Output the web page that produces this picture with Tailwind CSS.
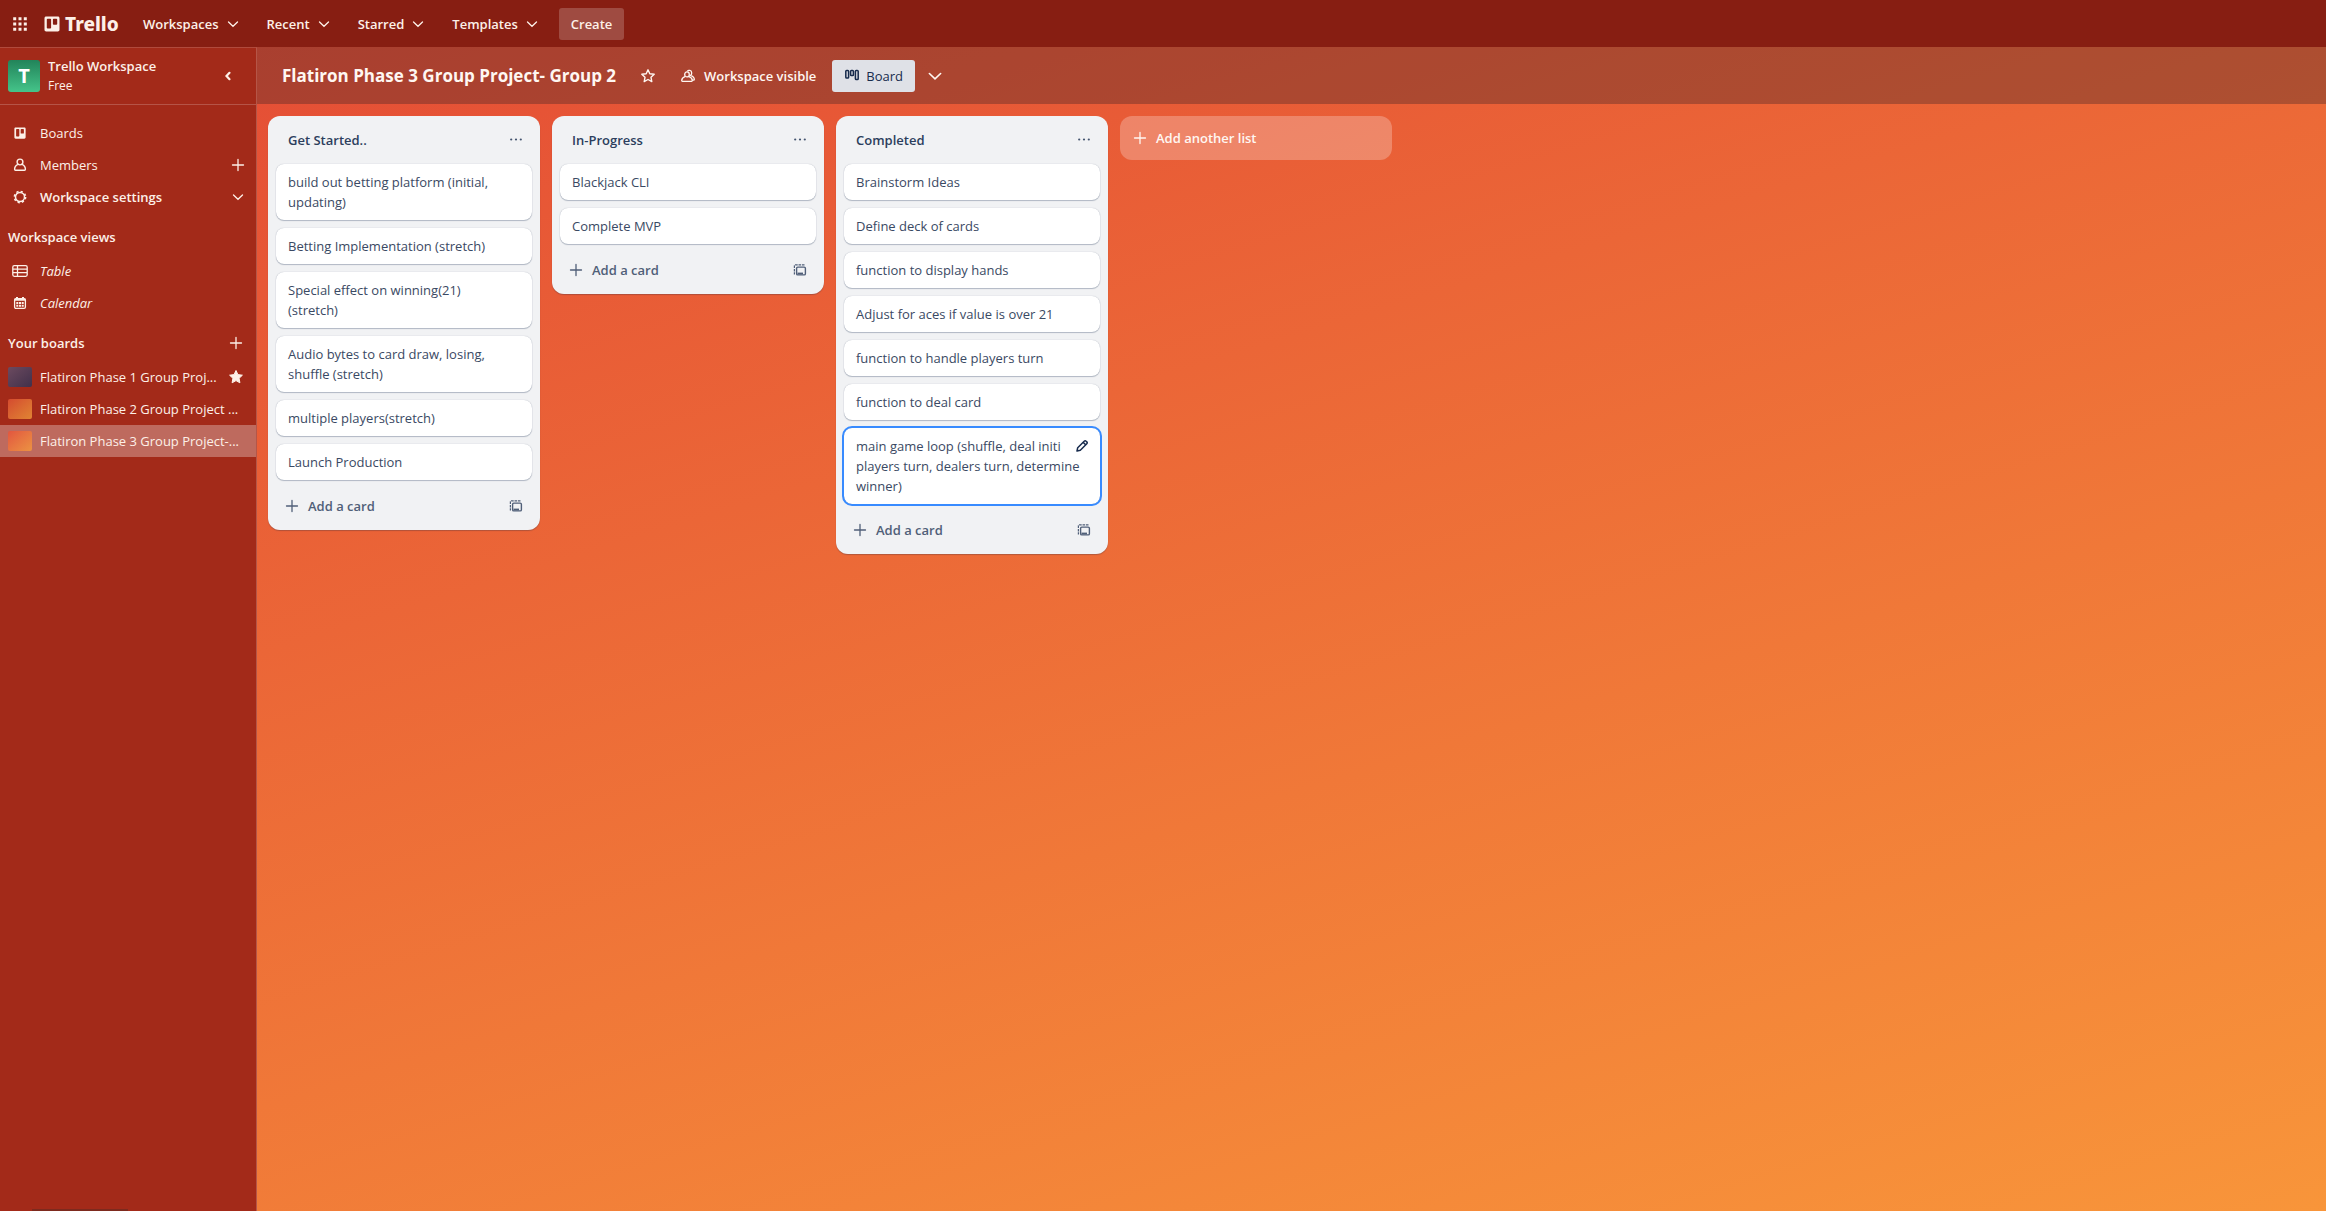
<!DOCTYPE html>
<html lang="en">
<head>
<meta charset="utf-8">
<meta name="viewport" content="width=device-width, initial-scale=1">
<title>Flatiron Phase 3 Group Project- Group 2 | Trello</title>
<script src="https://cdn.jsdelivr.net/npm/@tailwindcss/browser@4"></script>
</head>
<body class="flex min-h-screen flex-col bg-[linear-gradient(163deg,#e34935,#f8953a)] font-['Open_Sans',sans-serif] text-[13px] leading-5 text-[#172b4d]">

<svg class="hidden" aria-hidden="true">
  <symbol id="chevron" viewBox="0 0 16 16"><path d="M3.500 6L8 10.300 12.500 6" fill="none" stroke="currentColor" stroke-width="1.300" stroke-linecap="round"/></symbol>
  <symbol id="plus" viewBox="0 0 16 16"><path d="M8 2.500v11M2.500 8h11" fill="none" stroke="currentColor" stroke-width="1.300" stroke-linecap="round"/></symbol>
  <symbol id="dots" viewBox="0 0 16 16"><g fill="currentColor"><circle cx="3.200" cy="7.500" r="1.100"/><circle cx="8" cy="7.500" r="1.100"/><circle cx="12.800" cy="7.500" r="1.100"/></g></symbol>
  <symbol id="template" viewBox="0 0 16 16"><g fill="none" stroke="currentColor"><rect x="4.600" y="5.100" width="8.800" height="7.800" rx="1.200" stroke-width="1.400"/><path d="M5.500 11.500h5.500" stroke-width="1.800"/><path d="M12.500 2.800H3.400c-.6 0-1 .4-1 1v8.700" stroke-width="1.200" stroke-dasharray="2.600 .8"/></g></symbol>
  <symbol id="trello" viewBox="0 0 16 16"><path fill="currentColor" fill-rule="evenodd" d="M2.200.5h11.600c1 0 1.700.7 1.700 1.700v11.600c0 1-.7 1.700-1.700 1.700H2.200c-1 0-1.700-.7-1.700-1.700V2.200c0-1 .7-1.700 1.700-1.700zM3.600 2.700a.8.8 0 0 0-.8.8v8.200c0 .4.4.8.8.8h2.700c.4 0 .8-.4.8-.8V3.500a.8.8 0 0 0-.8-.8zm6.100 0a.8.8 0 0 0-.8.8v4.500c0 .4.4.8.8.8h2.700c.4 0 .8-.4.8-.8V3.500a.8.8 0 0 0-.8-.8z"/></symbol>
</svg>

<header class="flex h-[47px] items-center bg-[#871e12] pt-px pl-1 font-semibold text-[#fdf0e8]">
  <button class="flex size-8 items-center justify-center" aria-label="More from Atlassian">
    <svg class="size-[14px]" viewBox="0 0 14 14" fill="currentColor"><path d="M.2.200h3v3h-3zM5.500.2h3v3h-3zM10.800.2h3v3h-3zM.2 5.500h3v3h-3zM5.500 5.500h3v3h-3zM10.800 5.500h3v3h-3zM.2 10.800h3v3h-3zM5.500 10.800h3v3h-3zM10.800 10.800h3v3h-3z"/></svg>
  </button>
  <a href="#" class="ml-2 flex w-[88px] items-center gap-[5px]" aria-label="Trello home">
    <svg class="size-4"><use href="#trello"/></svg>
    <span class="font-['Noto_Sans',sans-serif] text-[19px] font-extrabold">Trello</span>
  </a>
  <nav class="flex gap-1">
    <button class="flex h-8 items-center gap-1.5 px-[11px]">Workspaces<svg class="size-4"><use href="#chevron"/></svg></button>
    <button class="flex h-8 items-center gap-1.5 px-[11px]">Recent<svg class="size-4"><use href="#chevron"/></svg></button>
    <button class="flex h-8 items-center gap-1.5 px-[11px]">Starred<svg class="size-4"><use href="#chevron"/></svg></button>
    <button class="flex h-8 items-center gap-1.5 px-[11px]">Templates<svg class="size-4"><use href="#chevron"/></svg></button>
  </nav>
  <button class="ml-2 h-8 rounded-[3px] bg-white/20 px-3">Create</button>
</header>

<div class="flex flex-1">
  <aside class="flex w-[257px] shrink-0 flex-col border-t border-r border-t-white/15 border-r-white/20 bg-[#a32a19] text-[#fdf0e8]">
    <div class="flex h-[57px] items-center border-b border-white/20 pr-3 pl-2">
      <span class="flex size-8 items-center justify-center rounded-[3px] bg-linear-to-b from-[#22845a] to-[#45c48a] text-xl font-bold text-white">T</span>
      <div class="ml-2 flex-1">
        <p class="font-semibold">Trello Workspace</p>
        <p class="text-[12px]">Free</p>
      </div>
      <button class="flex size-8 items-center justify-center" aria-label="Collapse sidebar"><svg class="size-4" viewBox="0 0 16 16"><path d="M9.500 4.800L6.500 8l3 3.200" fill="none" stroke="currentColor" stroke-width="2.200" stroke-linecap="round"/></svg></button>
    </div>
    <nav class="pt-3 font-medium">
      <a href="#" class="flex h-8 items-center gap-3 pr-2.5 pl-3"><svg class="size-4 p-[2px]"><use href="#trello"/></svg>Boards</a>
      <div class="flex h-8 items-center gap-3 pr-2.5 pl-3">
        <svg class="size-4" viewBox="0 0 16 16" fill="none" stroke="currentColor" stroke-width="1.400"><circle cx="8" cy="5" r="2.900"/><path d="M5.900 7.300C3.600 8.300 2.600 10 2.600 12.300c0 .6.300.9.900.9h9c.6 0 .9-.3.900-.9 0-2.300-1-4-3.300-5"/></svg>
        <a href="#" class="flex-1">Members</a>
        <button aria-label="Invite members"><svg class="size-4"><use href="#plus"/></svg></button>
      </div>
      <button class="flex h-8 w-full items-center gap-3 pr-2.5 pl-3 text-left font-semibold">
        <svg class="size-4" viewBox="0 0 16 16" fill="none" stroke="currentColor"><circle cx="8" cy="8" r="4.500" stroke-width="1.500"/><circle cx="8" cy="8" r="5.600" stroke-width="1.600" stroke-dasharray="2.200 2.200"/></svg>
        <span class="flex-1">Workspace settings</span>
        <svg class="size-4"><use href="#chevron"/></svg>
      </button>
      <h2 class="mt-2 flex h-8 items-center pl-2 font-semibold">Workspace views</h2>
      <a href="#" class="mt-0.5 flex h-8 items-center gap-3 pl-3 italic"><svg class="size-4" viewBox="0 0 16 16" fill="none" stroke="currentColor" stroke-width="1.300"><rect x=".8" y="2.700" width="14.400" height="10.600" rx="1.500"/><path d="M1 6.200h14M1 9.700h14M5.500 3v10"/></svg>Table</a>
      <a href="#" class="flex h-8 items-center gap-3 pl-3 italic"><svg class="size-4" viewBox="0 0 16 16" fill="none" stroke="currentColor"><rect x="2.600" y="3.700" width="10.800" height="9.700" rx="1.300" stroke-width="1.300"/><path d="M2.500 4.800h11M5 2v2M11 2v2" stroke-width="2"/><path d="M4.300 8h7.400M4.300 10.700h7.400" stroke-width="1.900" stroke-dasharray="2 .7"/></svg>Calendar</a>
      <div class="mt-2 flex h-8 items-center justify-between pr-3 pl-2">
        <h2 class="font-semibold">Your boards</h2>
        <button aria-label="Create board"><svg class="size-4"><use href="#plus"/></svg></button>
      </div>
      <a href="#" class="mt-0.5 flex h-8 items-center gap-2 pr-3 pl-2"><span class="h-5 w-6 shrink-0 rounded-xs bg-linear-to-br from-[#6c4a5f] to-[#41304a]"></span><span class="flex-1 whitespace-nowrap">Flatiron Phase 1 Group Proj...</span><svg class="size-4 shrink-0" viewBox="0 0 16 16"><path d="M8 1.500l1.900 4.100 4.500.6-3.300 3.100.8 4.500L8 11.600l-3.900 2.200.8-4.500L1.600 6.200l4.500-.6z" fill="currentColor" stroke="currentColor" stroke-linejoin="round"/></svg></a>
      <a href="#" class="flex h-8 items-center gap-2 pr-2 pl-2"><span class="h-5 w-6 shrink-0 rounded-xs bg-linear-to-br from-[#d44a2f] to-[#e08433]"></span><span class="whitespace-nowrap">Flatiron Phase 2 Group Project ...</span></a>
      <a href="#" class="flex h-8 items-center gap-2 bg-white/30 pr-2 pl-2" aria-current="page"><span class="h-5 w-6 shrink-0 rounded-xs bg-linear-to-br from-[#e2553f] to-[#eb9242]"></span><span class="whitespace-nowrap">Flatiron Phase 3 Group Project-...</span></a>
    </nav>
    <!-- top edge of the tray docked under the sidebar -->
    <div class="mt-auto ml-8 h-0.5 w-24 bg-[#7d2a1e]"></div>
  </aside>

  <main class="min-w-0 flex-1">
    <div class="flex h-[57px] items-center bg-[#4a2828]/38 pl-[25px] font-semibold text-[#fff7f2]">
      <h1 class="text-[17px] leading-6 font-bold">Flatiron Phase 3 Group Project- Group 2</h1>
      <button class="ml-4 flex size-8 items-center justify-center" aria-label="Star board"><svg class="size-4" viewBox="0 0 16 16"><path d="M8 1.800l1.800 4 4.400.5-3.200 3 .8 4.300L8 11.500l-3.800 2.100.8-4.300-3.200-3 4.400-.5z" fill="none" stroke="currentColor" stroke-width="1.400" stroke-linejoin="round"/></svg></button>
      <button class="ml-2 flex h-8 items-center gap-2 px-2">
        <svg class="size-4" viewBox="0 0 16 16" fill="none" stroke="currentColor" stroke-width="1.300"><ellipse cx="7" cy="6.400" rx="2.300" ry="2.500"/><path d="M5.300 8.400C3 9.300 1.700 11 1.700 12.600c0 .4.300.7.700.7h9.200c.4 0 .7-.3.700-.7 0-1.600-1.300-3.300-3.600-4.200M7.500 3.300C8 1.900 11.700 2 11.700 4.900c0 1.300-.5 2-1.200 2.500 2.300.8 3.800 2.400 3.800 4 0 .5-.3.700-.8.700h-1.200"/></svg>Workspace visible</button>
      <button class="ml-2 flex h-8 items-center gap-1.5 rounded-[3px] bg-[#dfe1e7] px-3 font-medium text-[#172b4d]">
        <svg class="size-4" viewBox="0 0 16 16" fill="none" stroke="currentColor" stroke-width="1.500"><rect x="1.800" y="2.500" width="2.800" height="7.500" rx=".8"/><rect x="6.600" y="2.500" width="2.800" height="5" rx=".8"/><rect x="11.400" y="2.500" width="2.800" height="9" rx=".8"/></svg>Board</button>
      <button class="ml-1 flex size-8 items-center justify-center" aria-label="Views"><svg class="size-5"><use href="#chevron"/></svg></button>
    </div>

    <div class="flex items-start gap-3 px-[11px] py-3">
      <section class="w-[272px] shrink-0 rounded-xl bg-[#f1f2f4] p-2 shadow-[0_1px_1px_#091e4240]">
        <div class="flex h-10 items-start justify-between pt-1.5 pr-2 pl-3"><h2 class="font-semibold text-[#2c3e5d]">Get Started..</h2><button class="pt-0.5 text-[#44546f]" aria-label="List actions"><svg class="size-4"><use href="#dots"/></svg></button></div>
        <ol class="flex flex-col gap-2 text-[#3a4963] *:rounded-lg *:bg-white *:px-3 *:py-2 *:shadow-[0_1px_1px_#091e4240,0_0_1px_#091e424f]">
          <li>build out betting platform (initial,<br>updating)</li>
          <li>Betting Implementation (stretch)</li>
          <li>Special effect on winning(21)<br>(stretch)</li>
          <li>Audio bytes to card draw, losing,<br>shuffle (stretch)</li>
          <li>multiple players(stretch)</li>
          <li>Launch Production</li>
        </ol>
        <div class="mt-2.5 flex h-8 items-center justify-between pr-2 pl-2 text-[#505f78]"><button class="flex items-center gap-2 font-semibold"><svg class="size-4"><use href="#plus"/></svg>Add a card</button><button aria-label="Create from template"><svg class="size-4"><use href="#template"/></svg></button></div>
      </section>

      <section class="w-[272px] shrink-0 rounded-xl bg-[#f1f2f4] p-2 shadow-[0_1px_1px_#091e4240]">
        <div class="flex h-10 items-start justify-between pt-1.5 pr-2 pl-3"><h2 class="font-semibold text-[#2c3e5d]">In-Progress</h2><button class="pt-0.5 text-[#44546f]" aria-label="List actions"><svg class="size-4"><use href="#dots"/></svg></button></div>
        <ol class="flex flex-col gap-2 text-[#3a4963] *:rounded-lg *:bg-white *:px-3 *:py-2 *:shadow-[0_1px_1px_#091e4240,0_0_1px_#091e424f]">
          <li>Blackjack CLI</li>
          <li>Complete MVP</li>
        </ol>
        <div class="mt-2.5 flex h-8 items-center justify-between pr-2 pl-2 text-[#505f78]"><button class="flex items-center gap-2 font-semibold"><svg class="size-4"><use href="#plus"/></svg>Add a card</button><button aria-label="Create from template"><svg class="size-4"><use href="#template"/></svg></button></div>
      </section>

      <section class="w-[272px] shrink-0 rounded-xl bg-[#f1f2f4] p-2 shadow-[0_1px_1px_#091e4240]">
        <div class="flex h-10 items-start justify-between pt-1.5 pr-2 pl-3"><h2 class="font-semibold text-[#2c3e5d]">Completed</h2><button class="pt-0.5 text-[#44546f]" aria-label="List actions"><svg class="size-4"><use href="#dots"/></svg></button></div>
        <ol class="flex flex-col gap-2 text-[#3a4963] *:rounded-lg *:bg-white *:px-3 *:py-2 *:shadow-[0_1px_1px_#091e4240,0_0_1px_#091e424f]">
          <li>Brainstorm Ideas</li>
          <li>Define deck of cards</li>
          <li>function to display hands</li>
          <li>Adjust for aces if value is over 21</li>
          <li>function to handle players turn</li>
          <li>function to deal card</li>
          <li class="relative outline-2 outline-[#388bff]"><span class="block whitespace-nowrap">main game loop (shuffle, deal initi</span>players turn, dealers turn, determine<br>winner)
            <button class="absolute top-0.5 right-0.5 flex size-8 items-center justify-center rounded-full bg-white text-[#172b4d]" aria-label="Edit card"><svg class="size-4" viewBox="0 0 16 16"><path d="M3 13l.7-3.300 6.500-6.500c.6-.6 1.300-.6 1.900 0l.7.7c.6.6.6 1.300 0 1.900l-6.500 6.500zM9.300 4.400l2.300 2.300" fill="none" stroke="currentColor" stroke-width="1.500" stroke-linejoin="round"/></svg></button>
          </li>
        </ol>
        <div class="mt-2.5 flex h-8 items-center justify-between pr-2 pl-2 text-[#505f78]"><button class="flex items-center gap-2 font-semibold"><svg class="size-4"><use href="#plus"/></svg>Add a card</button><button aria-label="Create from template"><svg class="size-4"><use href="#template"/></svg></button></div>
      </section>

      <button class="flex h-11 w-[272px] shrink-0 items-center gap-2 rounded-xl bg-white/25 px-3 font-semibold text-[#fff7f2]"><svg class="size-4"><use href="#plus"/></svg>Add another list</button>
    </div>
  </main>
</div>
</body>
</html>
